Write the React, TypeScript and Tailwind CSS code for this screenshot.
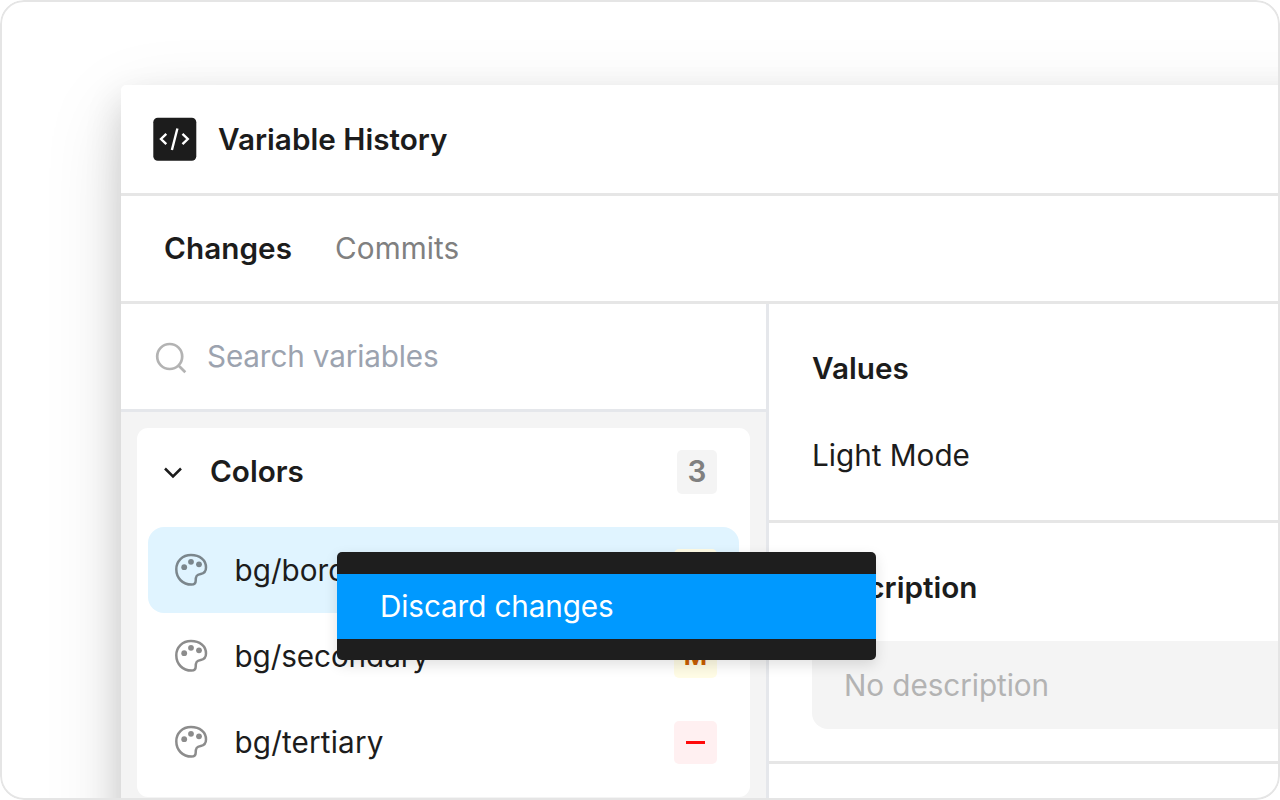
import React from "react";

const palette = "M17 2.100C8.400 2.100 2.300 8.300 2.300 16.300c0 8.800 6.400 15.300 15.200 15.300 3 0 4.200-1 4.200-3.800 0-4.600 1-6.300 5-6.900 3.500-.6 5.300-2.700 5.300-6.500C32 6.800 25.800 2.100 17 2.100Z";

function PaletteIcon() {
  return (
    <svg width="34" height="34" viewBox="0 0 34 34" fill="none" className="shrink-0 text-black/45">
      <path d={palette} stroke="currentColor" strokeWidth="2.500" />
      <circle cx="10.200" cy="14.200" r="2.900" fill="currentColor" />
      <circle cx="17" cy="8.800" r="2.900" fill="currentColor" />
      <circle cx="25" cy="11.300" r="2.900" fill="currentColor" />
    </svg>
  );
}

function Row({ active, label, children }: { active?: boolean; label: React.ReactNode; children: React.ReactNode }) {
  return (
    <div className={active ? "flex h-[86px] items-center rounded-2xl bg-[#e0f4ff] pr-[22px] pl-[26px]" : "flex h-[86px] items-center rounded-2xl pr-[22px] pl-[26px]"}>
      <PaletteIcon />
      <div className="ml-[26.500px] flex-1">{label}</div>
      {children}
    </div>
  );
}

const Modified = () => (
  <span className="flex h-[43px] w-[43px] items-center justify-center rounded-[5px] bg-[#fffce5] text-[25px] font-bold text-[#cc5f00]">M</span>
);

export default function App() {
  return (
    <div className="relative h-[800px] w-[1280px] overflow-hidden rounded-[24px] bg-white pt-[85px] pl-[121px] font-['Inter',sans-serif] text-[29.7px] leading-[43px] font-[430] tracking-normal text-[#1c1c1c]">
      <div className="flex h-[900px] w-[1400px] flex-col overflow-hidden rounded-[5px] bg-white shadow-[0_27px_80px_rgba(0,0,0,0.13),0_16px_36px_rgba(0,0,0,0.15)]">
        <header className="flex h-[111px] items-center border-b-[3px] border-[#e6e6e6] pl-8">
          <svg width="44" height="44" viewBox="0 0 44 44" fill="none">
            <rect x="0.300" y="0.800" width="43" height="43" rx="4.500" fill="#1c1c1c" />
            <path d="M13.300 16.800 8 22l5.300 5.200M29.500 16.800l5.300 5.200-5.300 5.200M24.400 11.500l-5.500 21.500" stroke="white" strokeWidth="2.400" />
          </svg>
          <h1 className="ml-[21px] font-semibold tracking-[0.010px]">Variable History</h1>
        </header>
        <nav className="flex h-[108px] items-center gap-[43px] border-b-[3px] border-[#e6e6e6] pl-[43px]">
          <span className="font-semibold tracking-[0.050px]">Changes</span>
          <span className="tracking-[0.050px] text-[#808080]">Commits</span>
        </nav>
        <main className="flex flex-1">
          <aside className="flex w-[648px] flex-col border-r-[3px] border-[#e5e7eb] bg-[#f4f4f4]">
            <div className="flex h-[108px] items-center border-b-[3px] border-[#e5e7eb] bg-white pl-[34px]">
              <svg width="32" height="32" viewBox="0 0 32 32" fill="none" className="mt-[3px]">
                <circle cx="14.700" cy="14.500" r="12.500" stroke="#b3b3b3" strokeWidth="2.700" />
                <path d="m23 23 7.300 7.300" stroke="#b3b3b3" strokeWidth="2.700" />
              </svg>
              <span className="ml-5 tracking-[-0.150px] text-[#9ca3af]">Search variables</span>
            </div>
            <section className="mx-4 mt-4 h-[369px] rounded-[11px] bg-white px-[11px]">
              <div className="flex h-[99px] items-start pt-[22px] pr-[22px] pl-[16px]">
                <svg width="18" height="12" viewBox="0 0 18 12" fill="none" className="mt-[17px]">
                  <path d="m1 1.500 8 8 8-8" stroke="#1c1c1c" strokeWidth="2.500" />
                </svg>
                <span className="ml-[28px] flex-1 font-semibold">Colors</span>
                <span className="flex h-[44px] w-10 items-center justify-center rounded-[5px] bg-[#f4f4f4] pb-px font-semibold text-[#808080]">3</span>
              </div>
              <Row active label="bg/border"><Modified /></Row>
              <Row label={<span className="tracking-[-0.100px]">bg/secondary</span>}><Modified /></Row>
              <Row label={<span className="tracking-[0.150px]">bg/tertiary</span>}>
                <span className="flex h-[43px] w-[43px] items-center justify-center rounded-[5px] bg-[#fff0f1]">
                  <span className="h-[3px] w-[19px] bg-[#ff0a0a]" />
                </span>
              </Row>
            </section>
          </aside>
          <div className="flex-1">
            <section className="h-[219px] border-b-[3px] border-[#e6e6e6] px-[43px] pt-[43px]">
              <h2 className="font-semibold">Values</h2>
              <p className="mt-[44px]">Light Mode</p>
            </section>
            <section className="h-[241px] border-b-[3px] border-[#e6e6e6] pt-[43px] pl-[43px]">
              <h2 className="font-semibold">Description</h2>
              <div className="mt-[32px] flex h-[88px] items-center rounded-2xl bg-[#f4f4f4] pl-8 tracking-[-0.060px] text-[#b3b3b3]">No description</div>
            </section>
          </div>
        </main>
      </div>
      <div className="absolute top-[552px] left-[337px] h-[108px] w-[539px] rounded-[5px] bg-[#1e1e1e] py-[21.500px] text-white shadow-[0_5px_14px_rgba(0,0,0,0.12)]">
        <div className="flex h-[65px] items-center bg-[#0099ff] pl-[43px] tracking-[-0.120px]">Discard changes</div>
      </div>
      <div className="pointer-events-none absolute inset-0 rounded-[24px] border-2 border-[#e5e5e5]" />
    </div>
  );
}
